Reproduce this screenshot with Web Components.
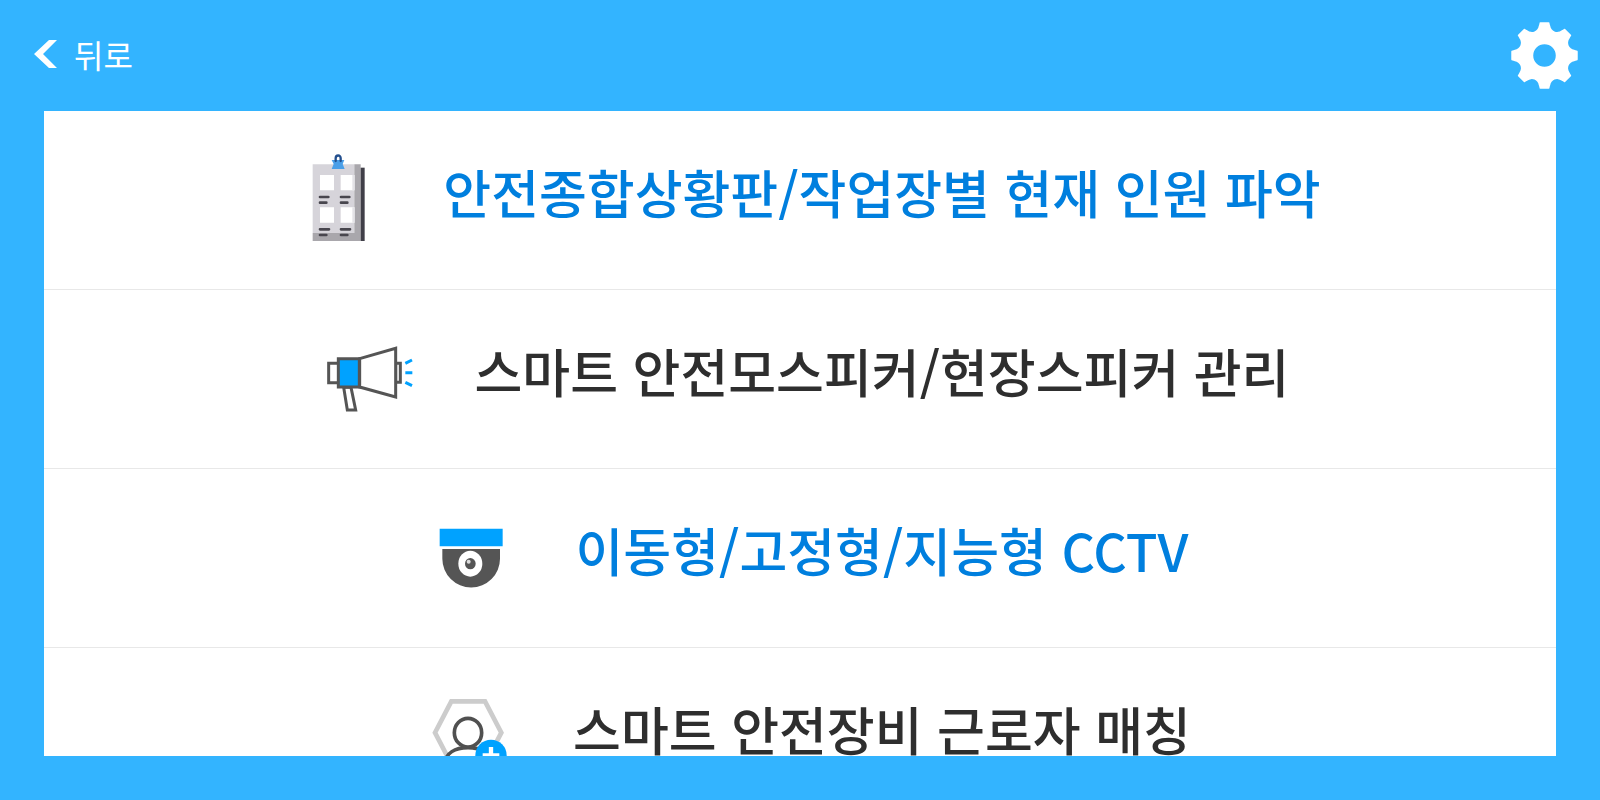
<!DOCTYPE html>
<html lang="ko">
<head>
<meta charset="utf-8">
<meta name="viewport" content="width=device-width, initial-scale=1">
<title>스마트 안전</title>
<style>
    body {
        margin: 0;
        font-family: "Noto Sans CJK KR", "Noto Sans", sans-serif;
    }
</style>
</head>
<body>
<safety-app>
    <safety-header slot="header">뒤로</safety-header>
    <safety-menu-item icon="board" accent>안전종합상황판/작업장별 현재 인원 파악</safety-menu-item>
    <safety-menu-item icon="speaker">스마트 안전모스피커/현장스피커 관리</safety-menu-item>
    <safety-menu-item icon="camera" accent>이동형/고정형/지능형 CCTV</safety-menu-item>
    <safety-menu-item icon="worker">스마트 안전장비 근로자 매칭</safety-menu-item>
</safety-app>

<script>
const ICONS = {
    board: `
        <svg viewBox="-32 0 360 360" aria-hidden="true">
            <path fill="#403f48" d="M212 83h13v220h-13z"/>
            <path fill="#d6d4da" d="M69 73h125v206H69z"/>
            <path fill="#a9a7ac" d="M194 73h19v230H69v-24h125z"/>
            <path fill="#fff" d="M91 105h42v46H91zM153 105h41v46h-41zM91 202h42v46H91zM153 202h41v46h-41z"/>
            <path fill="#e4e3e7" d="M188 105h7v46h-7zM188 202h7v46h-7z"/>
            <path stroke="#48464e" stroke-width="8" stroke-linecap="round" d="M91 171h25M91 188h19M154 171h25M154 188h19M91 268h27M91 285h19M154 268h27M154 285h19"/>
            <path fill="#4a9fe8" d="M126 60h38l-5 12 6 15h-39l6-15z"/>
            <path fill="none" stroke="#234f8e" stroke-width="7" stroke-linecap="round" d="M138 63V55a7 8 0 0 1 15 0v8"/>
        </svg>`,
    speaker: `
        <svg viewBox="3 -33 360 360" aria-hidden="true">
            <g fill="#fff" stroke="#555" stroke-width="9">
                <path d="M56 100h30v58H56z"/>
                <path d="M101 172h22l14 68h-25z"/>
                <path d="M257 100h14v57h-14z"/>
                <path d="M149 86l108-31v146l-108-30z"/>
                <path fill="#00a2ff" d="M85 86h63v85H85z"/>
            </g>
            <path stroke="#00a2ff" stroke-width="9" d="M286 100l20-10M286 128h21M286 157l20 10"/>
        </svg>`,
    camera: `
        <svg viewBox="-24 -36 360 360" aria-hidden="true">
            <path fill="#00a2ff" d="M59 56h189v53H59z"/>
            <path fill="#555" d="M67 117h173v29a86 86 0 0 1-173 0z"/>
            <ellipse cx="151" cy="161" rx="36" ry="39" fill="#fff"/>
            <ellipse cx="151" cy="161" rx="16" ry="17" fill="#555"/>
            <circle cx="146" cy="155" r="6" fill="#ddd"/>
        </svg>`,
    worker: `
        <svg viewBox="-3 -9 360 360" aria-hidden="true">
            <path fill="none" stroke="#ccc" stroke-width="14" d="M124 64h101l49 94-49 94H124l-49-94z"/>
            <g fill="#fff" stroke="#505050" stroke-width="11">
                <path d="M104 250c4-30 30-47 70-47s66 17 70 47"/>
                <ellipse cx="174" cy="158" rx="41" ry="43"/>
            </g>
            <circle cx="243" cy="226" r="47" fill="#00a2ff"/>
            <path stroke="#fff" stroke-width="13" d="M243 201v50M218 226h50"/>
        </svg>`
};

class SafetyApp extends HTMLElement {
    constructor() {
        super();

        this.attachShadow({ mode: 'open' });

        this.shadowRoot.innerHTML = `
            <style>
                :host {
                    display: flex;
                    flex-direction: column;
                    height: 100vh;
                    background: #33b4ff;
                }
                main {
                    flex: 1;
                    min-height: 0;
                    margin: 0 44px 44px;
                    overflow-y: auto;
                    scrollbar-width: none;
                    background: #fff;
                }
            </style>
            <slot name="header"></slot>
            <main><slot></slot></main>
        `;
    }
}

class SafetyHeader extends HTMLElement {
    constructor() {
        super();

        this.attachShadow({ mode: 'open' });

        this.shadowRoot.innerHTML = `
            <style>
                :host {
                    display: flex;
                    align-items: center;
                    justify-content: space-between;
                    padding: 22px 22px 22px 34px;
                }
                button {
                    display: flex;
                    align-items: center;
                    gap: 16px;
                    padding: 0;
                    border: 0;
                    background: none;
                    color: #fff;
                    font: inherit;
                    font-size: 32px;
                    line-height: 40px;
                    cursor: pointer;
                }
                .back {
                    padding-bottom: 4px;
                }
                svg {
                    display: block;
                    fill: #fff;
                }
            </style>
            <button class="back" type="button">
                <svg width="24" height="28" viewBox="0 0 24 28" aria-hidden="true">
                    <path d="M15 0h8L9 14l14 14h-8L0 14z"/>
                </svg>
                <slot></slot>
            </button>
            <button class="settings" type="button" aria-label="설정">
                <svg width="67" height="67" viewBox="-101 -101 202 202" aria-hidden="true"></svg>
            </button>
        `;
    }

    connectedCallback() {
        this.shadowRoot.querySelector('.settings svg').innerHTML = this._gear();
        this.shadowRoot.querySelector('.back').addEventListener('click', () => history.back());
    }

    // Eight teeth with a round notch between each pair
    _gear() {
        const point = (radius, degrees) => {
            const angle = degrees * Math.PI / 180;
            return `${(radius * Math.cos(angle)).toFixed(1)} ${(radius * Math.sin(angle)).toFixed(1)}`;
        };
        let d = '';

        for (let a = 0; a < 360; a += 45) {
            d += `${a ? 'L' : 'M'}${point(97, a - 9)}Q${point(101, a - 9)} ${point(101, a - 7)}`;
            d += `L${point(101, a + 7)}Q${point(101, a + 9)} ${point(97, a + 9)}`;
            d += `L${point(91, a + 11)}A21 21 0 0 0 ${point(91, a + 34)}`;
        }

        return `<path fill-rule="evenodd" d="${d}ZM34 0A34 34 0 1 0-34 0A34 34 0 1 0 34 0Z"/>`;
    }
}

class SafetyMenuItem extends HTMLElement {
    constructor() {
        super();

        this.attachShadow({ mode: 'open' });

        this.shadowRoot.innerHTML = `
            <style>
                :host {
                    display: block;
                    border-bottom: 1px solid #e8e8e8;
                    color: #2e2e2e;
                }
                :host([accent]) {
                    color: #007fde;
                }
                a {
                    display: flex;
                    align-items: center;
                    justify-content: center;
                    gap: 44px;
                    padding: 29px 0;
                    color: inherit;
                    font-size: 52px;
                    font-weight: 500;
                    line-height: 72px;
                    text-decoration: none;
                }
                .icon {
                    flex: none;
                    width: 120px;
                    height: 120px;
                }
                .label {
                    padding-bottom: 16px;
                }
                svg {
                    display: block;
                }
            </style>
            <a href="#">
                <span class="icon"></span>
                <span class="label"><slot></slot></span>
            </a>
        `;
    }

    connectedCallback() {
        const icon = this.getAttribute('icon');

        this.shadowRoot.querySelector('.icon').innerHTML = ICONS[icon];
        this.shadowRoot.querySelector('a').href = `#${icon}`;
    }
}

customElements.define('safety-app', SafetyApp);
customElements.define('safety-header', SafetyHeader);
customElements.define('safety-menu-item', SafetyMenuItem);
</script>
</body>
</html>
